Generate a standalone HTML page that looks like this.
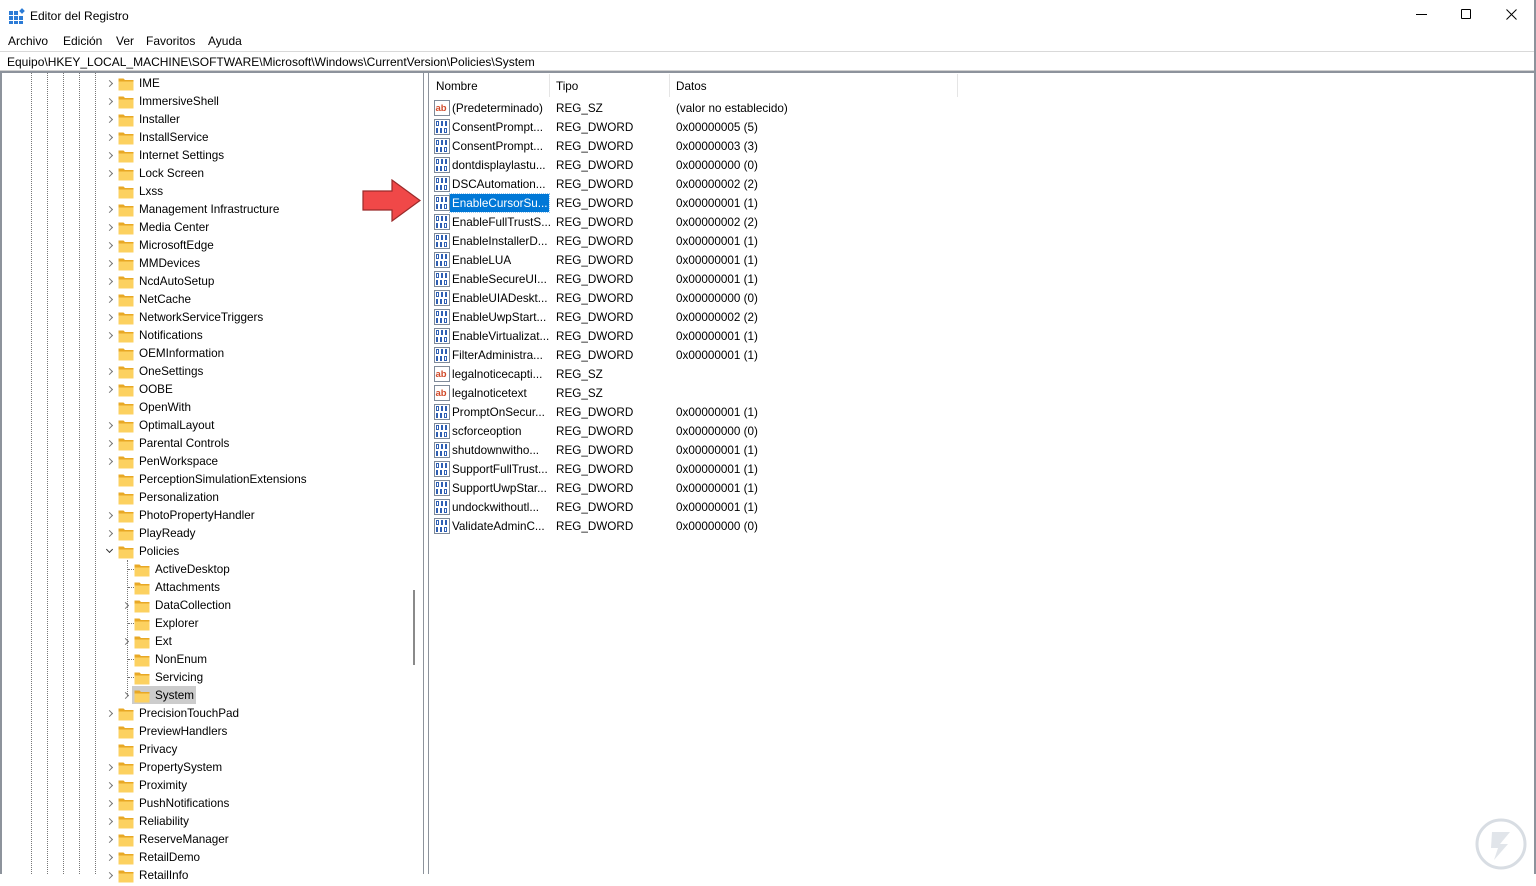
<!DOCTYPE html>
<html><head><meta charset="utf-8"><style>
*{margin:0;padding:0;box-sizing:border-box}
body{width:1536px;height:874px;overflow:hidden;background:#fff;font-family:"Liberation Sans",sans-serif;font-size:11.7px;color:#000;position:relative}
.a{position:absolute;white-space:nowrap}
.tl{position:absolute;width:0;border-left:1px dotted #777}
.t{position:absolute;height:18px;line-height:20px;white-space:nowrap}
.t .c{position:absolute;left:-32px;top:7px;width:5px;height:5px;border-right:1px solid #777;border-bottom:1px solid #777;transform:rotate(-45deg)}
.t .c.o{transform:rotate(45deg);top:5px;border-color:#333}
.t svg{position:absolute;left:-21px;top:3px}
.r{position:absolute;left:432px;height:19px;line-height:21px;white-space:nowrap}
.r span{position:absolute}
.r .n{left:20px}.r .y{left:124px}.r .d{left:244px}
.r svg{position:absolute;left:2px;top:2px}
</style></head><body>
<svg width="0" height="0" style="position:absolute"><defs>
<symbol id="f" viewBox="0 0 16 14"><path d="M0.5 1.5h5l1.5 1.5h8.5v10h-15z" fill="#e8a825"/><path d="M0.5 4.5h15v9h-15z" fill="#fcd160"/></symbol>
<symbol id="b" viewBox="0 0 16 16"><rect x="0.5" y="0.5" width="15" height="15" fill="#fff" stroke="#7f8a99"/><g fill="#2f5fb3"><rect x="2" y="2" width="3" height="5"/><rect x="7" y="2" width="2" height="5"/><rect x="11" y="2" width="2" height="5"/><rect x="2" y="9" width="2" height="5"/><rect x="6" y="9" width="2" height="5"/><rect x="10" y="9" width="3" height="5"/></g><rect x="3" y="3" width="1" height="3" fill="#fff"/><rect x="11" y="10" width="1" height="3" fill="#fff"/></symbol>
<symbol id="s" viewBox="0 0 16 16"><rect x="0.5" y="0.5" width="15" height="15" fill="#fff" stroke="#7f8a99"/><text x="1.5" y="11" font-size="9.5" font-family="Liberation Sans" font-weight="bold" fill="#d04a2a">ab</text></symbol>
</defs></svg>

<svg class="a" style="left:9px;top:8px" width="16" height="16" viewBox="0 0 16 16"><g fill="#2b7bd6"><rect x="0" y="3" width="4" height="4"/><rect x="5" y="3" width="4" height="4"/><rect x="0" y="8" width="4" height="4"/><rect x="5" y="8" width="4" height="4"/><rect x="10" y="8" width="4" height="4"/><rect x="0" y="13" width="4" height="3"/><rect x="5" y="13" width="4" height="3"/><rect x="10" y="13" width="4" height="3"/><rect x="11" y="1" width="4" height="4" transform="rotate(45 13 3)"/></g></svg>
<div class="a" style="left:30px;top:9px;font-size:12px">Editor del Registro</div>
<div class="a" style="left:1416px;top:14px;width:11px;border-top:1px solid #000"></div>
<div class="a" style="left:1461px;top:9px;width:10px;height:10px;border:1px solid #000;border-radius:1px"></div>
<svg class="a" style="left:1506px;top:9px" width="11" height="11"><path d="M0.5 0.5L10.5 10.5M10.5 0.5L0.5 10.5" stroke="#000" stroke-width="1"/></svg>
<div class="a" style="left:8px;top:34px;font-size:12px">Archivo</div>
<div class="a" style="left:63px;top:34px;font-size:12px">Edición</div>
<div class="a" style="left:116px;top:34px;font-size:12px">Ver</div>
<div class="a" style="left:146px;top:34px;font-size:12px">Favoritos</div>
<div class="a" style="left:208px;top:34px;font-size:12px">Ayuda</div>
<div class="a" style="left:0;top:51px;width:1536px;height:20px;border-top:1px solid #d9d9d9;border-bottom:1px solid #d0d0d0"></div>
<div class="a" style="left:7px;top:55px;font-size:12px">Equipo\HKEY_LOCAL_MACHINE\SOFTWARE\Microsoft\Windows\CurrentVersion\Policies\System</div>
<div class="a" style="left:0;top:71px;width:1536px;height:2px;background:#8d939c"></div>
<div class="a" style="left:0;top:71px;width:2px;height:803px;background:#8d939c"></div>
<div class="a" style="left:423px;top:71px;width:1px;height:803px;background:#8d939c"></div>
<div class="a" style="left:428px;top:71px;width:1px;height:803px;background:#8d939c"></div>
<div class="a" style="left:1534px;top:0;width:2px;height:874px;background:#8d939c"></div>
<div class="a" style="left:413px;top:590px;width:2px;height:75px;background:#8a8a8a"></div>

<div class="tl" style="left:31px;top:73px;height:801px"></div>
<div class="tl" style="left:47px;top:73px;height:801px"></div>
<div class="tl" style="left:63px;top:73px;height:801px"></div>
<div class="tl" style="left:79px;top:73px;height:801px"></div>
<div class="tl" style="left:95px;top:73px;height:801px"></div>
<div class="tl" style="left:127px;top:560px;height:136px"></div>
<div class="tl" style="left:128px;top:569px;width:6px;height:0;border-left:0;border-top:1px dotted #777"></div>
<div class="tl" style="left:128px;top:587px;width:6px;height:0;border-left:0;border-top:1px dotted #777"></div>
<div class="tl" style="left:128px;top:623px;width:6px;height:0;border-left:0;border-top:1px dotted #777"></div>
<div class="tl" style="left:128px;top:659px;width:6px;height:0;border-left:0;border-top:1px dotted #777"></div>
<div class="tl" style="left:128px;top:677px;width:6px;height:0;border-left:0;border-top:1px dotted #777"></div>

<div class="a" style="left:132px;top:686px;width:64px;height:18px;background:#cccccc"></div>
<div style="position:absolute;left:139px;top:0">
<div class="t" style="top:74px"><span class="c"></span><svg width="16" height="14"><use href="#f"/></svg>IME</div>
<div class="t" style="top:92px"><span class="c"></span><svg width="16" height="14"><use href="#f"/></svg>ImmersiveShell</div>
<div class="t" style="top:110px"><span class="c"></span><svg width="16" height="14"><use href="#f"/></svg>Installer</div>
<div class="t" style="top:128px"><span class="c"></span><svg width="16" height="14"><use href="#f"/></svg>InstallService</div>
<div class="t" style="top:146px"><span class="c"></span><svg width="16" height="14"><use href="#f"/></svg>Internet Settings</div>
<div class="t" style="top:164px"><span class="c"></span><svg width="16" height="14"><use href="#f"/></svg>Lock Screen</div>
<div class="t" style="top:182px"><svg width="16" height="14"><use href="#f"/></svg>Lxss</div>
<div class="t" style="top:200px"><span class="c"></span><svg width="16" height="14"><use href="#f"/></svg>Management Infrastructure</div>
<div class="t" style="top:218px"><span class="c"></span><svg width="16" height="14"><use href="#f"/></svg>Media Center</div>
<div class="t" style="top:236px"><span class="c"></span><svg width="16" height="14"><use href="#f"/></svg>MicrosoftEdge</div>
<div class="t" style="top:254px"><span class="c"></span><svg width="16" height="14"><use href="#f"/></svg>MMDevices</div>
<div class="t" style="top:272px"><span class="c"></span><svg width="16" height="14"><use href="#f"/></svg>NcdAutoSetup</div>
<div class="t" style="top:290px"><span class="c"></span><svg width="16" height="14"><use href="#f"/></svg>NetCache</div>
<div class="t" style="top:308px"><span class="c"></span><svg width="16" height="14"><use href="#f"/></svg>NetworkServiceTriggers</div>
<div class="t" style="top:326px"><span class="c"></span><svg width="16" height="14"><use href="#f"/></svg>Notifications</div>
<div class="t" style="top:344px"><svg width="16" height="14"><use href="#f"/></svg>OEMInformation</div>
<div class="t" style="top:362px"><span class="c"></span><svg width="16" height="14"><use href="#f"/></svg>OneSettings</div>
<div class="t" style="top:380px"><span class="c"></span><svg width="16" height="14"><use href="#f"/></svg>OOBE</div>
<div class="t" style="top:398px"><svg width="16" height="14"><use href="#f"/></svg>OpenWith</div>
<div class="t" style="top:416px"><span class="c"></span><svg width="16" height="14"><use href="#f"/></svg>OptimalLayout</div>
<div class="t" style="top:434px"><span class="c"></span><svg width="16" height="14"><use href="#f"/></svg>Parental Controls</div>
<div class="t" style="top:452px"><span class="c"></span><svg width="16" height="14"><use href="#f"/></svg>PenWorkspace</div>
<div class="t" style="top:470px"><svg width="16" height="14"><use href="#f"/></svg>PerceptionSimulationExtensions</div>
<div class="t" style="top:488px"><svg width="16" height="14"><use href="#f"/></svg>Personalization</div>
<div class="t" style="top:506px"><span class="c"></span><svg width="16" height="14"><use href="#f"/></svg>PhotoPropertyHandler</div>
<div class="t" style="top:524px"><span class="c"></span><svg width="16" height="14"><use href="#f"/></svg>PlayReady</div>
<div class="t" style="top:542px"><span class="c o"></span><svg width="16" height="14"><use href="#f"/></svg>Policies</div>
<div class="t" style="top:704px"><span class="c"></span><svg width="16" height="14"><use href="#f"/></svg>PrecisionTouchPad</div>
<div class="t" style="top:722px"><svg width="16" height="14"><use href="#f"/></svg>PreviewHandlers</div>
<div class="t" style="top:740px"><svg width="16" height="14"><use href="#f"/></svg>Privacy</div>
<div class="t" style="top:758px"><span class="c"></span><svg width="16" height="14"><use href="#f"/></svg>PropertySystem</div>
<div class="t" style="top:776px"><span class="c"></span><svg width="16" height="14"><use href="#f"/></svg>Proximity</div>
<div class="t" style="top:794px"><span class="c"></span><svg width="16" height="14"><use href="#f"/></svg>PushNotifications</div>
<div class="t" style="top:812px"><span class="c"></span><svg width="16" height="14"><use href="#f"/></svg>Reliability</div>
<div class="t" style="top:830px"><span class="c"></span><svg width="16" height="14"><use href="#f"/></svg>ReserveManager</div>
<div class="t" style="top:848px"><span class="c"></span><svg width="16" height="14"><use href="#f"/></svg>RetailDemo</div>
<div class="t" style="top:866px"><span class="c"></span><svg width="16" height="14"><use href="#f"/></svg>RetailInfo</div>
</div>
<div style="position:absolute;left:155px;top:0">
<div class="t" style="top:560px"><svg width="16" height="14"><use href="#f"/></svg>ActiveDesktop</div>
<div class="t" style="top:578px"><svg width="16" height="14"><use href="#f"/></svg>Attachments</div>
<div class="t" style="top:596px"><span class="c"></span><svg width="16" height="14"><use href="#f"/></svg>DataCollection</div>
<div class="t" style="top:614px"><svg width="16" height="14"><use href="#f"/></svg>Explorer</div>
<div class="t" style="top:632px"><span class="c"></span><svg width="16" height="14"><use href="#f"/></svg>Ext</div>
<div class="t" style="top:650px"><svg width="16" height="14"><use href="#f"/></svg>NonEnum</div>
<div class="t" style="top:668px"><svg width="16" height="14"><use href="#f"/></svg>Servicing</div>
<div class="t" style="top:686px"><span class="c"></span><svg width="16" height="14"><use href="#f"/></svg>System</div>
</div>

<div class="a" style="left:436px;top:80px">Nombre</div>
<div class="a" style="left:556px;top:80px">Tipo</div>
<div class="a" style="left:676px;top:80px">Datos</div>
<div class="a" style="left:549px;top:74px;width:1px;height:23px;background:#e5e5e5"></div>
<div class="a" style="left:669px;top:74px;width:1px;height:23px;background:#e5e5e5"></div>
<div class="a" style="left:957px;top:74px;width:1px;height:23px;background:#e5e5e5"></div>

<div class="a" style="left:450px;top:194px;width:99px;height:18px;background:#0078d7;outline:1px dotted #99c9ef"></div>

<div class="r" style="top:98px"><svg width="16" height="16"><use href="#s"/></svg><span class="n">(Predeterminado)</span><span class="y">REG_SZ</span><span class="d">(valor no establecido)</span></div>
<div class="r" style="top:117px"><svg width="16" height="16"><use href="#b"/></svg><span class="n">ConsentPrompt...</span><span class="y">REG_DWORD</span><span class="d">0x00000005 (5)</span></div>
<div class="r" style="top:136px"><svg width="16" height="16"><use href="#b"/></svg><span class="n">ConsentPrompt...</span><span class="y">REG_DWORD</span><span class="d">0x00000003 (3)</span></div>
<div class="r" style="top:155px"><svg width="16" height="16"><use href="#b"/></svg><span class="n">dontdisplaylastu...</span><span class="y">REG_DWORD</span><span class="d">0x00000000 (0)</span></div>
<div class="r" style="top:174px"><svg width="16" height="16"><use href="#b"/></svg><span class="n">DSCAutomation...</span><span class="y">REG_DWORD</span><span class="d">0x00000002 (2)</span></div>
<div class="r" style="top:193px"><svg width="16" height="16"><use href="#b"/></svg><span class="n" style="color:#fff">EnableCursorSu...</span><span class="y">REG_DWORD</span><span class="d">0x00000001 (1)</span></div>
<div class="r" style="top:212px"><svg width="16" height="16"><use href="#b"/></svg><span class="n">EnableFullTrustS...</span><span class="y">REG_DWORD</span><span class="d">0x00000002 (2)</span></div>
<div class="r" style="top:231px"><svg width="16" height="16"><use href="#b"/></svg><span class="n">EnableInstallerD...</span><span class="y">REG_DWORD</span><span class="d">0x00000001 (1)</span></div>
<div class="r" style="top:250px"><svg width="16" height="16"><use href="#b"/></svg><span class="n">EnableLUA</span><span class="y">REG_DWORD</span><span class="d">0x00000001 (1)</span></div>
<div class="r" style="top:269px"><svg width="16" height="16"><use href="#b"/></svg><span class="n">EnableSecureUI...</span><span class="y">REG_DWORD</span><span class="d">0x00000001 (1)</span></div>
<div class="r" style="top:288px"><svg width="16" height="16"><use href="#b"/></svg><span class="n">EnableUIADeskt...</span><span class="y">REG_DWORD</span><span class="d">0x00000000 (0)</span></div>
<div class="r" style="top:307px"><svg width="16" height="16"><use href="#b"/></svg><span class="n">EnableUwpStart...</span><span class="y">REG_DWORD</span><span class="d">0x00000002 (2)</span></div>
<div class="r" style="top:326px"><svg width="16" height="16"><use href="#b"/></svg><span class="n">EnableVirtualizat...</span><span class="y">REG_DWORD</span><span class="d">0x00000001 (1)</span></div>
<div class="r" style="top:345px"><svg width="16" height="16"><use href="#b"/></svg><span class="n">FilterAdministra...</span><span class="y">REG_DWORD</span><span class="d">0x00000001 (1)</span></div>
<div class="r" style="top:364px"><svg width="16" height="16"><use href="#s"/></svg><span class="n">legalnoticecapti...</span><span class="y">REG_SZ</span></div>
<div class="r" style="top:383px"><svg width="16" height="16"><use href="#s"/></svg><span class="n">legalnoticetext</span><span class="y">REG_SZ</span></div>
<div class="r" style="top:402px"><svg width="16" height="16"><use href="#b"/></svg><span class="n">PromptOnSecur...</span><span class="y">REG_DWORD</span><span class="d">0x00000001 (1)</span></div>
<div class="r" style="top:421px"><svg width="16" height="16"><use href="#b"/></svg><span class="n">scforceoption</span><span class="y">REG_DWORD</span><span class="d">0x00000000 (0)</span></div>
<div class="r" style="top:440px"><svg width="16" height="16"><use href="#b"/></svg><span class="n">shutdownwitho...</span><span class="y">REG_DWORD</span><span class="d">0x00000001 (1)</span></div>
<div class="r" style="top:459px"><svg width="16" height="16"><use href="#b"/></svg><span class="n">SupportFullTrust...</span><span class="y">REG_DWORD</span><span class="d">0x00000001 (1)</span></div>
<div class="r" style="top:478px"><svg width="16" height="16"><use href="#b"/></svg><span class="n">SupportUwpStar...</span><span class="y">REG_DWORD</span><span class="d">0x00000001 (1)</span></div>
<div class="r" style="top:497px"><svg width="16" height="16"><use href="#b"/></svg><span class="n">undockwithoutl...</span><span class="y">REG_DWORD</span><span class="d">0x00000001 (1)</span></div>
<div class="r" style="top:516px"><svg width="16" height="16"><use href="#b"/></svg><span class="n">ValidateAdminC...</span><span class="y">REG_DWORD</span><span class="d">0x00000000 (0)</span></div>

<svg class="a" style="left:362px;top:179px" width="60" height="43" viewBox="0 0 60 43"><path d="M1 12H30V1L58 21.5L30 42V31H1Z" fill="#f04848" stroke="#9a2a2a" stroke-width="1.2"/></svg>

<svg class="a" style="left:1474px;top:818px" width="54" height="52" viewBox="0 0 54 52"><circle cx="27" cy="26" r="24" fill="none" stroke="#d8dde3" stroke-width="3"/><path d="M18 14h18l-10 12h8l-14 16 4-12h-7z" fill="#e1e5ea"/></svg>
</body></html>
